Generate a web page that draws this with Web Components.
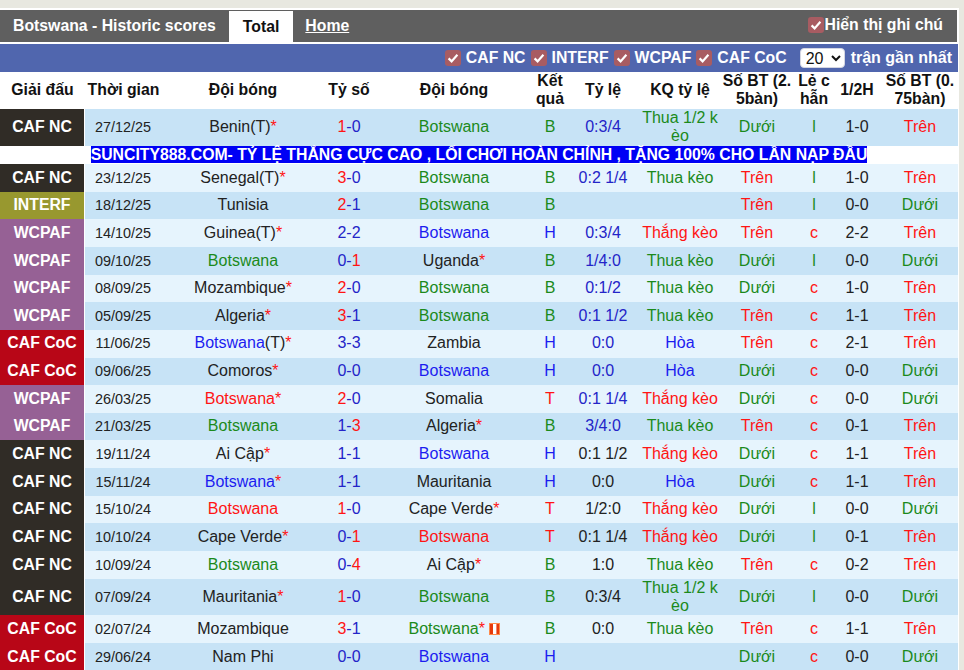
<!DOCTYPE html>
<html lang="vi">
<head>
<meta charset="utf-8">
<title>Botswana - Historic scores</title>
<style>
html,body{margin:0;padding:0;background:#e8e8e0;overflow:hidden}
body{font:16px "Liberation Sans",Arial,sans-serif;color:#222}
</style>
</head>
<body>
<template id="t-panel">
  <style>
    :host{display:block;width:958px;padding:2px 1px 0 0;margin-top:8px;background:#fff}
  </style>
  <slot></slot>
</template>

<template id="t-tabbar">
  <style>
    :host{display:flex;align-items:flex-end;height:32px;margin-right:1px;background:#5f5f5f;color:#fff;font-weight:700;font-size:15.8px;box-sizing:border-box}
    .title{align-self:center;padding:0 13px}
    .tab{height:31px;line-height:31px;padding:0 14px;background:#fff;color:#111}
    .home{align-self:center;padding:0 12px;color:#fff;text-decoration:underline}
    .end{margin-left:auto;align-self:center;padding-right:14px}
  </style>
  <span class="title">Botswana - Historic scores</span>
  <span class="tab">Total</span>
  <span class="home">Home</span>
  <span class="end"><slot></slot></span>
</template>

<template id="t-check">
  <style>
    :host{display:inline-flex;align-items:center;gap:var(--gap,5px);font-weight:700;font-size:15.8px;color:#fff}
    svg{display:block;width:16px;height:16px;flex:none}
  </style>
  <svg viewBox="0 0 16 16" aria-hidden="true"><rect width="16" height="16" rx="3" fill="#a85c62"/><path d="M3.6 8.4 6.6 11.4 12.4 4.8" fill="none" stroke="#fff" stroke-width="2.2"/></svg>
  <slot></slot>
</template>

<template id="t-filter">
  <style>
    :host{display:flex;align-items:center;justify-content:flex-end;height:28px;margin-top:2px;padding-right:6px;background:#5066ae;color:#fff;font-weight:700;box-sizing:border-box}
    ::slotted(check-label){margin-right:5px}
    .sel{display:inline-flex;align-items:center;margin:0 6px 0 8px}
    select{width:45px;height:20px;padding:0 0 0 1px;border:1px solid #d4d6e2;border-radius:4px;background:#fff;color:#111;font:16px "Liberation Sans",Arial,sans-serif}
  </style>
  <slot></slot>
  <span class="sel"><select aria-label="Số trận"><option>20</option></select></span>
  <span>trận gần nhất</span>
</template>

<template id="t-row">
  <style>
    :host{display:grid;grid-template-columns:85px 77px 162px 50px 160px 32px 74px 80px 74px 40px 46px 78px;min-height:27.65px;width:958px;background:var(--row,#e6f4fd);color:#222;font-size:16px;line-height:18.4px}
    .c{display:flex;align-items:center;justify-content:center;text-align:center;padding:0 1px;min-width:0;box-sizing:border-box;word-break:break-all}
    .lg{background:#fff;padding:0 1px 0 0;align-items:stretch}
    .lg b{flex:1;display:flex;align-items:center;justify-content:center;color:#fff;font-size:15.8px;background:var(--lg)}
    .date{font-size:14.4px;padding:0 2px 0 1px}
    .last{padding:0 0 0 2px}
    .g{color:#1b8a1b}.b{color:#1c1cf0}.r{color:#ff1414}.k{color:#222}.o{color:#2424c8}
    .star{color:#ff1414}
    svg{width:11px;height:12px;margin:-1px 0 0 3.5px;flex:none}
    .team{white-space:nowrap}
  </style>
  <div class="c lg"><b id="lg"></b></div>
  <div class="c date" id="date"></div>
  <div class="c team" id="home"></div>
  <div class="c" id="score"></div>
  <div class="c team" id="away"></div>
  <div class="c" id="res"></div>
  <div class="c" id="odds"></div>
  <div class="c" id="kq"></div>
  <div class="c" id="bt"></div>
  <div class="c" id="lc"></div>
  <div class="c" id="half"></div>
  <div class="c last" id="bt75"></div>
</template>

<template id="t-head">
  <style>
    :host{display:grid;grid-template-columns:85px 77px 162px 50px 160px 32px 74px 80px 74px 40px 46px 78px;width:958px;background:#fff;color:#111;font-weight:700;font-size:15.8px;line-height:18.4px}
    div{display:flex;align-items:center;justify-content:center;text-align:center;padding:0 1px;box-sizing:border-box;word-break:break-all;min-height:36.8px}
    div:last-child{padding:0 0 0 2px}
  </style>
  <div>Giải đấu</div><div>Thời gian</div><div>Đội bóng</div><div>Tỷ số</div><div>Đội bóng</div><div>Kết quả</div><div>Tỷ lệ</div><div>KQ tỷ lệ</div><div>Số BT (2.5bàn)</div><div>Lẻ c hẫn</div><div>1/2H</div><div>Số BT (0.75bàn)</div>
</template>

<template id="t-ad">
  <style>
    :host{display:block;width:958px;background:#fff;text-align:center;font-weight:700;font-size:15.8px;line-height:18.4px;height:18.4px;white-space:nowrap}
    span{background:#0000f5;color:#fff}
  </style>
  <span><slot></slot></span>
</template>

<template id="t-table">
  <style>:host{display:block;width:958px}</style>
  <slot></slot>
</template>

<history-panel>
  <tab-bar><check-label style="--gap:1px">Hiển thị ghi chú</check-label></tab-bar>
  <filter-bar>
    <check-label>CAF NC</check-label>
    <check-label>INTERF</check-label>
    <check-label>WCPAF</check-label>
    <check-label>CAF CoC</check-label>
  </filter-bar>
  <score-table id="tbl"><score-head></score-head></score-table>
</history-panel>

<script>
const LG={'CAF NC':'#302c26','INTERF':'#98982f','WCPAF':'#966195','CAF CoC':'#b80617'};
const ROWS=[
['CAF NC','27/12/25','Benin|k|(T)|*','1-0','Botswana|g','B','0:3/4|o','Thua 1/2 kèo','D','l','1-0','T'],
['CAF NC','23/12/25','Senegal|k|(T)|*','3-0','Botswana|g','B','0:2 1/4|o','Thua kèo','T','l','1-0','T'],
['INTERF','18/12/25','Tunisia|k','2-1','Botswana|g','B','','','T','l','0-0','D'],
['WCPAF','14/10/25','Guinea|k|(T)|*','2-2','Botswana|b','H','0:3/4|o','Thắng kèo','T','c','2-2','T'],
['WCPAF','09/10/25','Botswana|g','0-1','Uganda|k||*','B','1/4:0|o','Thua kèo','D','l','0-0','D'],
['WCPAF','08/09/25','Mozambique|k||*','2-0','Botswana|g','B','0:1/2|o','Thua kèo','D','c','1-0','T'],
['WCPAF','05/09/25','Algeria|k||*','3-1','Botswana|g','B','0:1 1/2|o','Thua kèo','T','c','1-1','T'],
['CAF CoC','11/06/25','Botswana|b|(T)|*','3-3','Zambia|k','H','0:0|o','Hòa','T','c','2-1','T'],
['CAF CoC','09/06/25','Comoros|k||*','0-0','Botswana|b','H','0:0|o','Hòa','D','c','0-0','D'],
['WCPAF','26/03/25','Botswana|r||*','2-0','Somalia|k','T','0:1 1/4|o','Thắng kèo','D','c','0-0','D'],
['WCPAF','21/03/25','Botswana|g','1-3','Algeria|k||*','B','3/4:0|o','Thua kèo','T','c','0-1','T'],
['CAF NC','19/11/24','Ai Cập|k||*','1-1','Botswana|b','H','0:1 1/2|k','Thắng kèo','D','c','1-1','T'],
['CAF NC','15/11/24','Botswana|b||*','1-1','Mauritania|k','H','0:0|k','Hòa','D','c','1-1','T'],
['CAF NC','15/10/24','Botswana|r','1-0','Cape Verde|k||*','T','1/2:0|k','Thắng kèo','D','l','0-0','D'],
['CAF NC','10/10/24','Cape Verde|k||*','0-1','Botswana|r','T','0:1 1/4|k','Thắng kèo','D','l','0-1','T'],
['CAF NC','10/09/24','Botswana|g','0-4','Ai Cập|k||*','B','1:0|k','Thua kèo','T','c','0-2','T'],
['CAF NC','07/09/24','Mauritania|k||*','1-0','Botswana|g','B','0:3/4|k','Thua 1/2 kèo','D','l','0-0','D'],
['CAF CoC','02/07/24','Mozambique|k','3-1','Botswana|g||*|flag','B','0:0|k','Thua kèo','T','c','1-1','T'],
['CAF CoC','29/06/24','Nam Phi|k','0-0','Botswana|b','H','','','D','c','0-0','D']
];
const tpl=id=>document.getElementById(id).content.cloneNode(true);
function simple(name,id){
  customElements.define(name,class extends HTMLElement{
    constructor(){super();this.attachShadow({mode:'open'}).appendChild(tpl(id));}
  });
}
simple('history-panel','t-panel');
simple('tab-bar','t-tabbar');
simple('check-label','t-check');
simple('filter-bar','t-filter');
simple('score-head','t-head');
simple('ad-strip','t-ad');
simple('score-table','t-table');

const FLAG='<svg viewBox="0 0 11 12" aria-hidden="true"><rect width="11" height="12" fill="#e63a0c"/><rect x=".5" y=".5" width="10" height="11" fill="none" stroke="#ff8a4a" stroke-width="1"/><rect x="4" y="1" width="3.4" height="10" fill="#fff"/></svg>';
const span=(cls,t)=>{const s=document.createElement('span');s.className=cls;s.textContent=t;return s;};
customElements.define('score-row',class extends HTMLElement{
  constructor(){super();this.attachShadow({mode:'open'}).appendChild(tpl('t-row'));}
  set data(d){
    const $=id=>this.shadowRoot.getElementById(id);
    const [lg,date,home,score,away,res,odds,kq,bt,lc,half,bt75]=d;
    this.style.setProperty('--lg',LG[lg]);
    $('lg').textContent=lg;
    $('date').textContent=date;
    const team=(el,v)=>{
      const [n,c,suf,st,fl]=v.split('|');
      const w=document.createElement('span');
      w.appendChild(span(c,n));
      if(suf)w.appendChild(span('k',suf));
      if(st)w.appendChild(span('star',st));
      el.appendChild(w);
      if(fl)el.insertAdjacentHTML('beforeend',FLAG);
    };
    team($('home'),home);team($('away'),away);
    const [a,b]=score.split('-').map(Number);
    const s=$('score');
    if(a>b){s.append(span('r',a),span('o','-'+b));}
    else if(a<b){s.append(span('o',a+'-'),span('r',b));}
    else s.append(span('o',score));
    const resCls={B:'g',H:'b',T:'r'}[res];
    $('res').appendChild(span(resCls,res));
    if(odds){const [t,c]=odds.split('|');$('odds').appendChild(span(c,t));}
    if(kq){const c=kq.startsWith('Thua')?'g':kq.startsWith('Thắng')?'r':'b';$('kq').appendChild(span(c,kq));}
    const ou=(el,v)=>el.appendChild(v==='T'?span('r','Trên'):span('g','Dưới'));
    ou($('bt'),bt);ou($('bt75'),bt75);
    $('lc').appendChild(lc==='l'?span('g','l'):span('r','c'));
    $('half').appendChild(span('k',half));
  }
});
const tbl=document.getElementById('tbl');
ROWS.forEach((d,i)=>{
  const r=document.createElement('score-row');
  r.data=d;
  r.style.setProperty('--row',i%2?'#e6f4fd':'#c7e3f6');
  tbl.appendChild(r);
  if(i===0){
    const ad=document.createElement('ad-strip');
    ad.textContent='SUNCITY888.COM- TỶ LỆ THẮNG CỰC CAO , LỐI CHƠI HOÀN CHỈNH , TẶNG 100% CHO LẦN NẠP ĐẦU';
    tbl.appendChild(ad);
  }
});
</script>
</body>
</html>
